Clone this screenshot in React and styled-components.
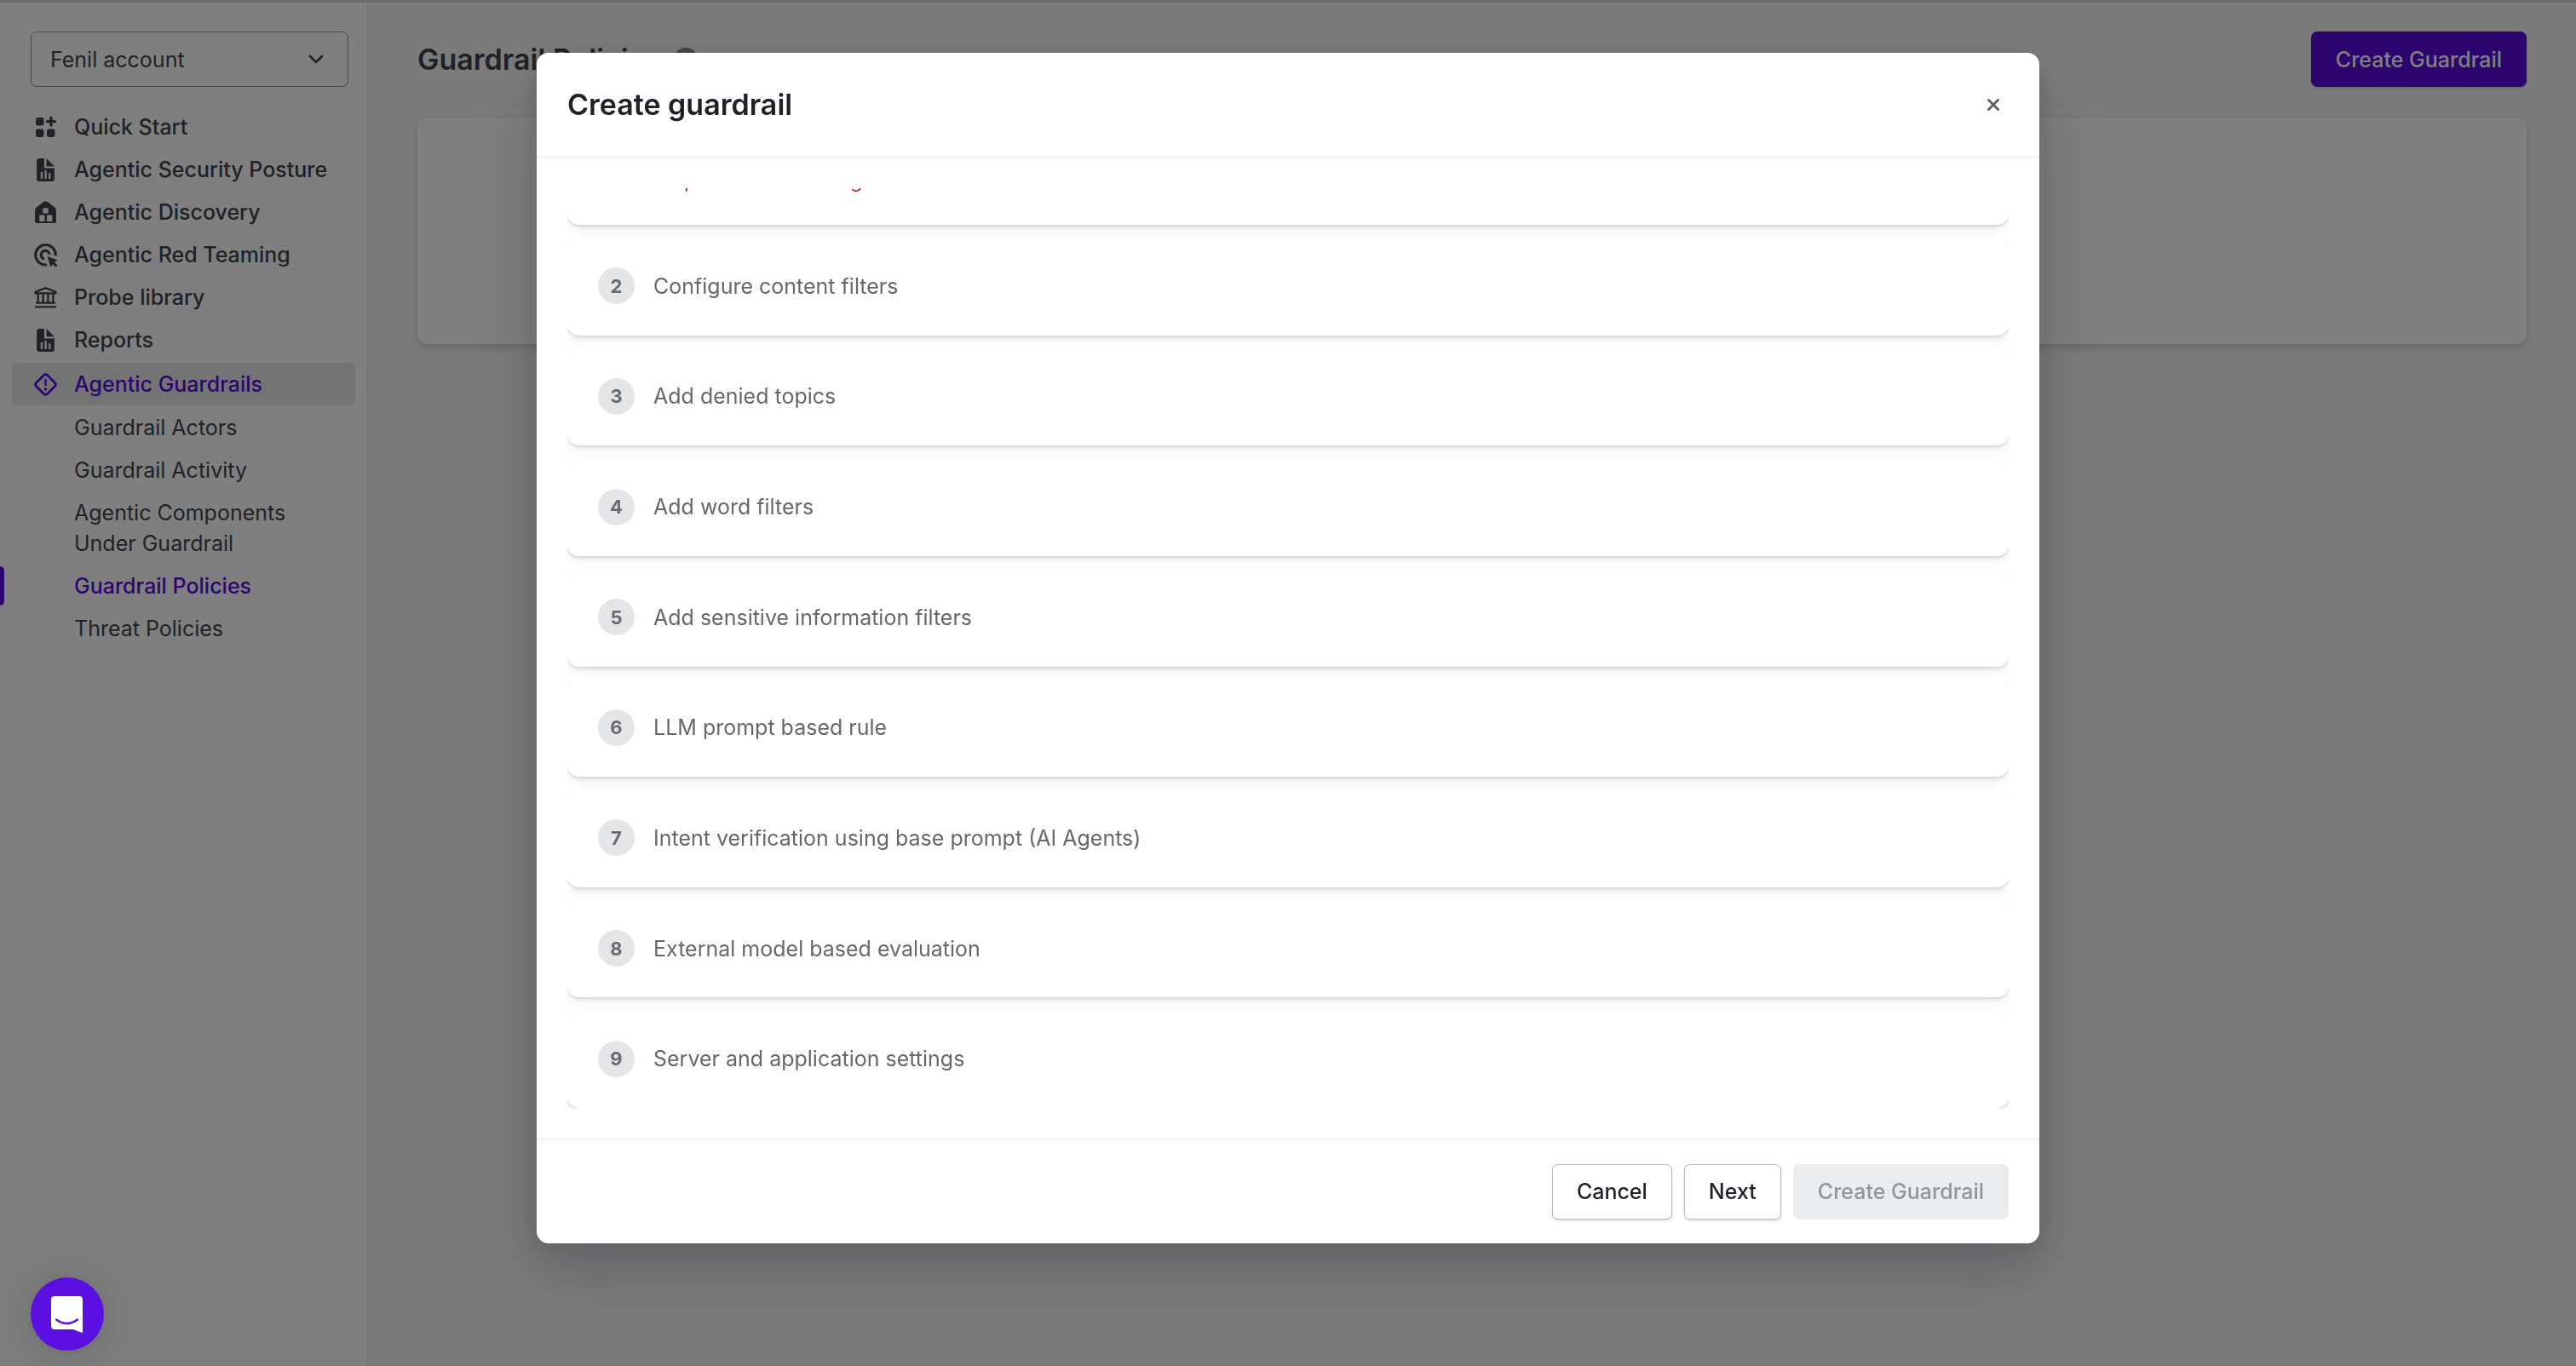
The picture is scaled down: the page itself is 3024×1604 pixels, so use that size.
import React from "react";
import styled, { createGlobalStyle } from "styled-components";

const Global = createGlobalStyle`
  *, *::before, *::after { box-sizing: border-box; }
  body { margin: 0; background: #f6f6f7; color: #42444c; font-family: Inter, "Liberation Sans", sans-serif; font-size: 25px; line-height: 36px; }
  button, select { font: inherit; }
`;

const Page = styled.div`
  display: grid;
  grid-template-columns: 432px minmax(0, 1fr);
  min-height: 100vh;
  border-top: 3px solid #d8d8d8;
`;

const Sidebar = styled.aside`
  background: #ffffff;
  border-right: 1px solid #e9e9ec;
  padding-top: 34px;
`;

const AccountField = styled.label`
  display: flex;
  align-items: center;
  margin: 0 22px 22px 36px;
  height: 65px;
  padding-right: 28px;
  border: 1px solid #8d8f98;
  border-radius: 7px;
`;

const AccountSelect = styled.select`
  flex: 1;
  appearance: none;
  border: 0;
  padding: 0 22px;
  background: transparent;
  color: #42444c;
`;

const NavList = styled.ul`
  list-style: none;
  margin: 0;
  padding: 0 14px;

  & + & { margin-top: 2px; }
`;

const NavLink = styled.a`
  display: flex;
  align-items: center;
  gap: 20px;
  padding: 7px 14px 7px 26px;
  border-radius: 6px;
  font-weight: 500;
  text-decoration: none;
  color: ${(p) => (p.$active ? "#5a0bdc" : "#42444c")};
  background: ${(p) => (p.$active ? "#e9e9e9" : "transparent")};

  svg { flex: none; width: 27px; height: 27px; }
`;

const SubList = styled.ul`
  list-style: none;
  margin: 1px -14px 0;
  padding: 0;
`;

const SubItem = styled.li`
  display: flex;
  align-items: center;

  &::before {
    content: "";
    width: 5px;
    height: 46px;
    border-radius: 0 5px 5px 0;
    background: ${(p) => (p.$active ? "#5a0bdc" : "transparent")};
  }
`;

const SubLink = styled.a`
  flex: 1;
  padding: 7px 60px 7px 82px;
  font-weight: ${(p) => (p.$active ? 500 : 400)};
  text-decoration: none;
  color: ${(p) => (p.$active ? "#5a0bdc" : "#42444c")};
`;

const Main = styled.main`
  padding: 34px 58px;
`;

const PageHeader = styled.header`
  display: flex;
  align-items: center;
  justify-content: space-between;
  margin-bottom: 36px;
`;

const PageTitle = styled.h1`
  display: flex;
  align-items: center;
  gap: 14px;
  margin: 0;
  color: #42444c;
  font-size: 34px;
  line-height: 44px;
  font-weight: 600;
`;

const Panel = styled.section`
  height: 266px;
  border-radius: 12px;
  background: #ffffff;
  box-shadow: 0 2px 6px rgba(0, 0, 0, 0.12), 0 6px 14px rgba(0, 0, 0, 0.08);
`;

const Button = styled.button`
  height: 65px;
  padding: 0 28px;
  border: 1px solid ${(p) => (p.$primary ? "#5a0bdc" : "#b6b8c0")};
  border-radius: 7px;
  background: ${(p) => (p.$primary ? "#5a0bdc" : "#ffffff")};
  color: ${(p) => (p.$primary ? "#ffffff" : "#1f2126")};
  font-weight: 500;
  box-shadow: 0 2px 3px rgba(60, 64, 72, 0.16);

  &:disabled {
    border-color: #ebecee;
    background: #ebecee;
    color: #91959d;
    box-shadow: none;
  }
`;

const Overlay = styled.div`
  position: fixed;
  inset: 0;
  display: flex;
  justify-content: center;
  align-items: flex-start;
  padding: 62px 24px 144px;
  background: rgba(0, 0, 0, 0.5);
`;

const Dialog = styled.div`
  display: flex;
  flex-direction: column;
  width: 100%;
  max-width: 1764px;
  height: 100%;
  border-radius: 14px;
  background: #ffffff;
  box-shadow:
    0 5px 18px rgba(40, 42, 50, 0.1),
    0 19px 48px rgba(40, 42, 50, 0.12),
    0 44px 86px rgba(40, 42, 50, 0.16);
`;

const DialogHeader = styled.header`
  display: flex;
  align-items: center;
  justify-content: space-between;
  height: 123px;
  padding: 0 36px;
  border-bottom: 1px solid #e3e4e6;
`;

const DialogTitle = styled.h2`
  margin: 0;
  color: #1f2126;
  font-size: 34px;
  line-height: 44px;
  font-weight: 600;
`;

const CloseButton = styled.button`
  display: flex;
  align-items: center;
  justify-content: center;
  width: 36px;
  height: 36px;
  padding: 0;
  border: 0;
  background: transparent;
  color: #60636a;
`;

const DialogBody = styled.div`
  display: flex;
  flex: 1;
  min-height: 0;
  padding: 36px;
`;

const StepList = styled.ol`
  display: grid;
  flex: 1;
  grid-template-rows: 43px repeat(8, minmax(0, 1fr));
  row-gap: 14px;
  overflow: hidden;
  list-style: none;
  margin: 0;
  padding: 0;
`;

const Step = styled.li`
  display: flex;
  align-items: center;
  gap: 22px;
  padding: 0 36px;
  border-radius: 14px;
  background: #ffffff;
  color: #66686b;
  box-shadow: 0 2px 3px rgba(50, 60, 75, 0.13), 0 5px 10px rgba(50, 60, 75, 0.1);
`;

const FirstStep = styled(Step)`
  align-items: flex-end;
  padding: 0 36px 36px 100px;
  border-radius: 0 0 14px 14px;
  color: #bd3e2b;
  font-size: 24px;
  line-height: 32px;
`;

const StepNumber = styled.span`
  display: flex;
  align-items: center;
  justify-content: center;
  width: 43px;
  height: 43px;
  border-radius: 50%;
  background: #e4e5e7;
  color: #6b6c6f;
  font-size: 22px;
  font-weight: 700;
`;

const DialogFooter = styled.footer`
  display: flex;
  align-items: center;
  justify-content: flex-end;
  gap: 14px;
  height: 123px;
  padding: 0 36px;
  border-top: 1px solid #e3e4e6;
`;

const ChatButton = styled.button`
  position: fixed;
  left: 36px;
  bottom: 18px;
  display: flex;
  align-items: center;
  justify-content: center;
  width: 86px;
  height: 86px;
  padding: 0;
  border: 0;
  border-radius: 50%;
  background: #5b0fe0;
  box-shadow: 0 2px 10px rgba(0, 0, 0, 0.06), 0 4px 58px rgba(0, 0, 0, 0.16);
`;

const GridPlusIcon = () => (
  <svg viewBox="0 0 26 26" fill="currentColor" aria-hidden="true">
    <rect x="2" y="2" width="9" height="9" rx="2" />
    <rect x="2" y="15" width="9" height="9" rx="2" />
    <rect x="14.500" y="15" width="9" height="9" rx="2" />
    <path d="M19.200.5a1.600 1.600 0 0 1 1.600 1.600v2.700h2.700a1.600 1.600 0 0 1 0 3.200h-2.700v2.700a1.600 1.600 0 0 1-3.200 0V8h-2.700a1.600 1.600 0 0 1 0-3.200h2.700V2.100A1.600 1.600 0 0 1 19.200.5z" />
  </svg>
);

const ReportIcon = () => (
  <svg viewBox="0 0 26 26" fill="currentColor" aria-hidden="true">
    <path
      fillRule="evenodd"
      d="M6 0h5.500v11H23v12a3 3 0 0 1-3 3H6a3 3 0 0 1-3-3V3a3 3 0 0 1 3-3zM7.500 15.500V23h2.200v-7.500zM12 13.500V23h2.200v-9.500zM16.500 16.500V23h2.200v-6.500z"
    />
    <path d="M14 0l9 9h-9z" />
  </svg>
);

const DiscoveryIcon = () => (
  <svg viewBox="0 0 26 26" fill="currentColor" aria-hidden="true">
    <path
      fillRule="evenodd"
      d="M10 1.500Q13-.500 16 1.500L23 7q2 1.500 2 4v12a2 2 0 0 1-2 2H3a2 2 0 0 1-2-2V11q0-2.500 2-4zM10 8v6h6V8zM6 16v7H12v-7zM14.500 16v7H20.500v-7z"
    />
  </svg>
);

const TargetIcon = () => (
  <svg viewBox="0 0 26 26" fill="none" stroke="currentColor" strokeWidth="3" aria-hidden="true">
    <path d="M14.500 24A11.300 11.300 0 1 1 24.200 14" />
    <path d="M11.500 17.500a4.800 4.800 0 1 1 6-5" />
    <path d="M15 14.500l12 4.300-4.200 2.200 4.200 4-2 2-4-4-2.200 4z" fill="currentColor" stroke="none" />
  </svg>
);

const LibraryIcon = () => (
  <svg viewBox="0 0 26 26" fill="none" stroke="currentColor" strokeWidth="2.200" aria-hidden="true">
    <path d="M1.500 8V6.500L13 2l11.500 4.500V8z" strokeLinejoin="round" />
    <path d="M4.500 8v10M10.200 8v10M15.800 8v10M21.500 8v10M2 19h22M1 23.500h24" />
  </svg>
);

const GuardIcon = () => (
  <svg viewBox="0 0 26 26" fill="none" stroke="currentColor" strokeWidth="2.600" aria-hidden="true">
    <path d="M11.300 2.200a2.400 2.400 0 0 1 3.400 0l9.100 9.100a2.400 2.400 0 0 1 0 3.400l-9.100 9.100a2.400 2.400 0 0 1-3.400 0l-9.100-9.100a2.400 2.400 0 0 1 0-3.400z" />
    <path d="M13 6.800v7.700" strokeWidth="2.200" />
    <circle cx="13" cy="18.300" r="1.600" fill="currentColor" stroke="none" />
  </svg>
);

const navItems = [
  { label: "Quick Start", Icon: GridPlusIcon },
  { label: "Agentic Security Posture", Icon: ReportIcon },
  { label: "Agentic Discovery", Icon: DiscoveryIcon },
  { label: "Agentic Red Teaming", Icon: TargetIcon },
  { label: "Probe library", Icon: LibraryIcon },
  { label: "Reports", Icon: ReportIcon },
];

const guardrailItems = [
  "Guardrail Actors",
  "Guardrail Activity",
  "Agentic Components Under Guardrail",
  "Guardrail Policies",
  "Threat Policies",
];

const steps = [
  "Configure content filters",
  "Add denied topics",
  "Add word filters",
  "Add sensitive information filters",
  "LLM prompt based rule",
  "Intent verification using base prompt (AI Agents)",
  "External model based evaluation",
  "Server and application settings",
];

export default function App() {
  return (
    <>
      <Global />
      <Page>
        <Sidebar>
          <AccountField>
            <AccountSelect aria-label="Account" defaultValue="fenil">
              <option value="fenil">Fenil account</option>
            </AccountSelect>
            <svg width="18" height="12" viewBox="0 0 18 12" fill="none" stroke="currentColor" strokeWidth="2.600" strokeLinecap="round" strokeLinejoin="round" aria-hidden="true">
              <path d="M2 2l7 7 7-7" />
            </svg>
          </AccountField>
          <nav aria-label="Main">
            <NavList>
              {navItems.map(({ label, Icon }) => (
                <li key={label}>
                  <NavLink href="#"><Icon />{label}</NavLink>
                </li>
              ))}
            </NavList>
            <NavList>
              <li>
                <NavLink href="#" $active><GuardIcon />Agentic Guardrails</NavLink>
                <SubList>
                  {guardrailItems.map((label) => {
                    const active = label === "Guardrail Policies";
                    return (
                      <SubItem key={label} $active={active}>
                        <SubLink href="#" $active={active}>{label}</SubLink>
                      </SubItem>
                    );
                  })}
                </SubList>
              </li>
            </NavList>
          </nav>
        </Sidebar>
        <Main>
          <PageHeader>
            <PageTitle>
              Guardrail Policies
              <svg width="28" height="28" viewBox="0 0 28 28" aria-hidden="true">
                <circle cx="14" cy="14" r="14" fill="#8a8794" />
                <path d="M10 11a4 4 0 1 1 5.500 3.700q-1.500.8-1.500 2.800M14 20.500v1.500" fill="none" stroke="#fff" strokeWidth="2.200" />
              </svg>
            </PageTitle>
            <Button type="button" $primary>Create Guardrail</Button>
          </PageHeader>
          <Panel />
        </Main>
      </Page>
      <Overlay>
        <Dialog role="dialog" aria-modal="true" aria-labelledby="dialog-title">
          <DialogHeader>
            <DialogTitle id="dialog-title">Create guardrail</DialogTitle>
            <CloseButton type="button" aria-label="Close">
              <svg width="16" height="16" viewBox="0 0 16 16" fill="none" stroke="currentColor" strokeWidth="3" strokeLinecap="round" aria-hidden="true">
                <path d="M2.500 2.500l11 11M13.500 2.500l-11 11" />
              </svg>
            </CloseButton>
          </DialogHeader>
          <DialogBody>
            <StepList>
              <FirstStep>Step one needs fixing</FirstStep>
              {steps.map((label, i) => (
                <Step key={label}>
                  <StepNumber>{i + 2}</StepNumber>
                  {label}
                </Step>
              ))}
            </StepList>
          </DialogBody>
          <DialogFooter>
            <Button type="button">Cancel</Button>
            <Button type="button">Next</Button>
            <Button type="button" disabled>Create Guardrail</Button>
          </DialogFooter>
        </Dialog>
      </Overlay>
      <ChatButton type="button" aria-label="Open chat">
        <svg width="40" height="44" viewBox="0 0 40 44" aria-hidden="true">
          <path d="M5 1h29a4 4 0 0 1 4 4v39q-7-2-11-4H5a4 4 0 0 1-4-4V5a4 4 0 0 1 4-4z" fill="#fff" />
          <path d="M7 28.500q12.500 9 25 0" fill="none" stroke="#5b0fe0" strokeWidth="2.400" strokeLinecap="round" />
        </svg>
      </ChatButton>
    </>
  );
}
